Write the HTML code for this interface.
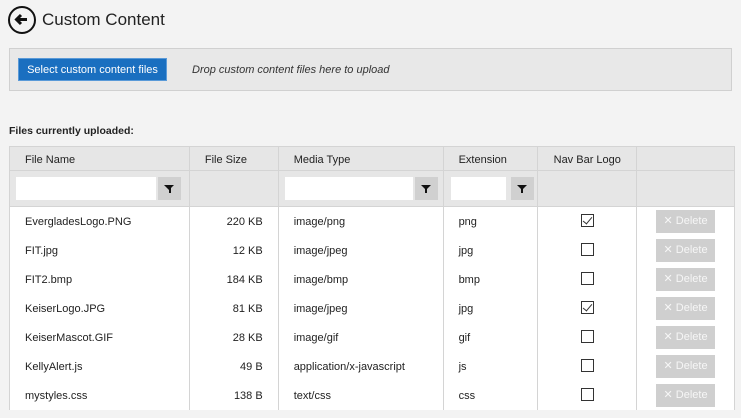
<!DOCTYPE html>
<html><head><style>
*{margin:0;padding:0;box-sizing:border-box}
body{width:741px;height:418px;background:#f3f3f3;font-family:"Liberation Sans",sans-serif;font-size:11px;color:#222;position:relative;overflow:hidden}
.a{position:absolute}
.back{left:8px;top:6px;width:28px;height:28px;border:2.5px solid #111;border-radius:50%}
h1{position:absolute;left:42px;top:10px;font-size:17px;font-weight:normal;color:#222}
.drop{left:9px;top:48px;width:723px;height:43px;background:#e8e8e8;border:1px solid #d0d0d0}
.btn{left:18px;top:58px;width:149px;height:23px;background:#1a6fc0;color:#fff;font-size:11px;line-height:23px;text-align:center;border:1px solid #5a9ad8}
.dt{left:192px;top:64px;font-style:italic;color:#333}
.lbl{left:9px;top:125px;font-weight:bold;font-size:10.5px}
table{position:absolute;left:9px;top:146px;width:726px;border-collapse:collapse;background:#fff}
th,td{border-left:1px solid #d4d4d4;border-right:1px solid #d4d4d4;font-weight:normal;text-align:left}
th{background:#e6e6e6;height:24px;border:1px solid #d4d4d4;padding-left:15px;padding-top:2px}
tr.f td{background:#e6e6e6;height:36px;border-bottom:1px solid #d4d4d4;padding-top:0}
td{height:29px;padding-left:15px;padding-top:2px}
.inp{display:inline-block;width:140px;height:23px;background:#fff;vertical-align:middle}
.fb{display:inline-block;width:23px;height:23px;background:#d0d0d0;vertical-align:middle;margin-left:2px;position:relative}
.fb:after{content:"";position:absolute;left:6px;top:8px;border-left:5.5px solid transparent;border-right:5.5px solid transparent;border-top:5px solid #111}
.fb:before{content:"";position:absolute;left:10.5px;top:11px;width:2px;height:5px;background:#111}
.r{text-align:right;padding-right:15px}
.cb{display:inline-block;width:13px;height:13px;border:1px solid #333;background:#fff;position:relative;vertical-align:middle;margin-top:-4px}
.ck:after{content:"";position:absolute;left:3px;top:0px;width:4px;height:8px;border-right:1.5px solid #333;border-bottom:1.5px solid #333;transform:rotate(40deg)}
.del{display:inline-block;width:59px;height:23px;background:#cfcfcf;color:#f6f6f6;line-height:23px;text-align:center;font-size:11px;vertical-align:middle;margin-top:-2px}
.c{text-align:center;padding-left:0}
</style></head><body>
<div class="a back"><svg width="23" height="23" viewBox="0 0 23 23" style="position:absolute;left:0;top:0"><path d="M17 11.5H6.5M11 7L6.5 11.5 11 16" stroke="#111" stroke-width="3" fill="none"/></svg></div>
<h1>Custom Content</h1>
<div class="a drop"></div>
<div class="a btn">Select custom content files</div>
<div class="a dt">Drop custom content files here to upload</div>
<div class="a lbl">Files currently uploaded:</div>
<table>
<colgroup><col style="width:180px"><col style="width:89px"><col style="width:165px"><col style="width:95px"><col style="width:99px"><col style="width:98px"></colgroup>
<tr><th>File Name</th><th>File Size</th><th>Media Type</th><th>Extension</th><th style="padding-left:0;text-align:center">Nav Bar Logo</th><th></th></tr>
<tr class="f"><td style="padding-left:6px"><span class="inp"></span><span class="fb"></span></td><td></td><td style="padding-left:6px"><span class="inp" style="width:128px"></span><span class="fb"></span></td><td style="padding-left:7px"><span class="inp" style="width:55px"></span><span class="fb" style="margin-left:5px"></span></td><td></td><td></td></tr>
<tr><td>EvergladesLogo.PNG</td><td class="r">220 KB</td><td>image/png</td><td>png</td><td class="c"><span class="cb ck"></span></td><td class="c"><span class="del">✕ Delete</span></td></tr>
<tr><td>FIT.jpg</td><td class="r">12 KB</td><td>image/jpeg</td><td>jpg</td><td class="c"><span class="cb"></span></td><td class="c"><span class="del">✕ Delete</span></td></tr>
<tr><td>FIT2.bmp</td><td class="r">184 KB</td><td>image/bmp</td><td>bmp</td><td class="c"><span class="cb"></span></td><td class="c"><span class="del">✕ Delete</span></td></tr>
<tr><td>KeiserLogo.JPG</td><td class="r">81 KB</td><td>image/jpeg</td><td>jpg</td><td class="c"><span class="cb ck"></span></td><td class="c"><span class="del">✕ Delete</span></td></tr>
<tr><td>KeiserMascot.GIF</td><td class="r">28 KB</td><td>image/gif</td><td>gif</td><td class="c"><span class="cb"></span></td><td class="c"><span class="del">✕ Delete</span></td></tr>
<tr><td>KellyAlert.js</td><td class="r">49 B</td><td>application/x-javascript</td><td>js</td><td class="c"><span class="cb"></span></td><td class="c"><span class="del">✕ Delete</span></td></tr>
<tr><td>mystyles.css</td><td class="r">138 B</td><td>text/css</td><td>css</td><td class="c"><span class="cb"></span></td><td class="c"><span class="del">✕ Delete</span></td></tr>
</table>
</body></html>
